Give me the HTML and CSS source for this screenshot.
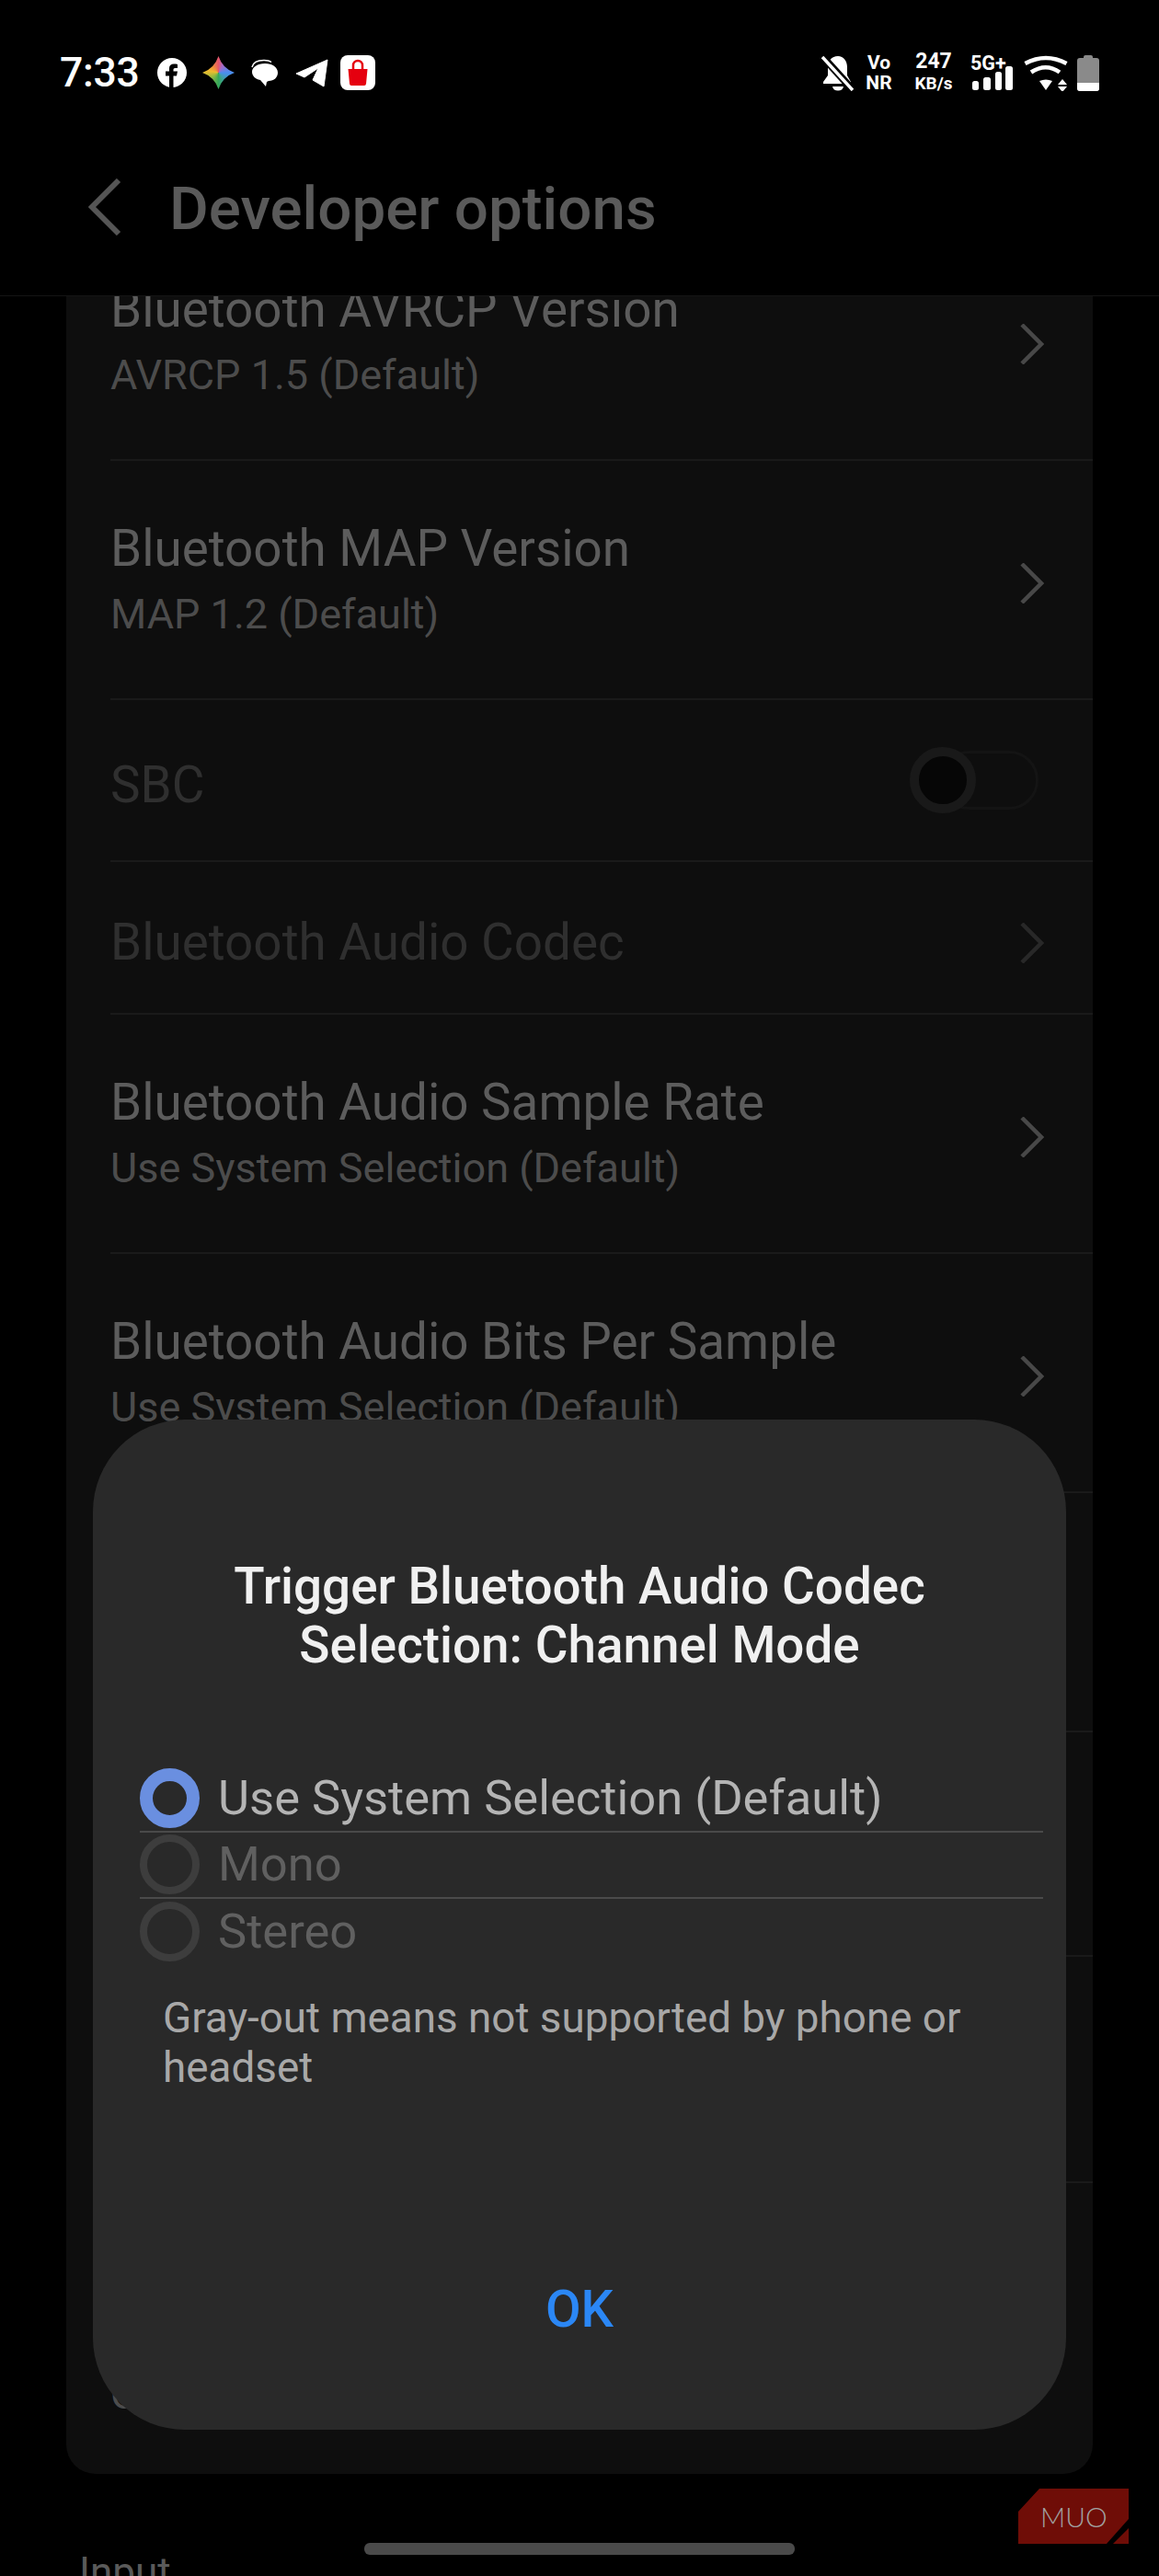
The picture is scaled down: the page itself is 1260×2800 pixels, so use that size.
FILE: index.html
```html
<!DOCTYPE html>
<html lang="en">
<head>
<meta charset="utf-8">
<title>Developer options</title>
<link rel="stylesheet" href="styles.css">
</head>
<body>
<div class="screen">
  <header class="top">
    <div class="status">
      <span class="time">7:33</span>
      <svg class="ic-fb" viewBox="0 0 32 32"><circle cx="16" cy="16" r="16" fill="#fff"/><path d="M13 32V19.500H9v-5h4V11c0-3 2-4.500 5-4.500 1.500 0 3 .2 4 .4V11h-2.500c-1.500 0-2 .8-2 2v1.500H22l-1 5h-3.500V32z" fill="#000"/></svg>
      <div class="ic-star"></div>
      <svg class="ic-msg" viewBox="0 0 31 30"><path d="M2 9C3 4 8 1.500 15 1.500c3 0 6 .5 8 2" fill="none" stroke="#fff" stroke-width="1.500"/><path d="M16 5c8 0 14 4 14 10 0 5-4 9-10 9l-2 1-1 5-6-7C5 22 2 18 2 14c0-5 6-9 14-9z" fill="#fff"/></svg>
      <svg class="ic-tg" viewBox="0 0 36 31"><path d="M1 16 35 1 31 30 19 23 25 10 10 20z" fill="#fff" stroke="#fff" stroke-linejoin="round" stroke-width="1"/></svg>
      <svg class="ic-shop" viewBox="0 0 38 38"><rect width="38" height="38" rx="8" fill="#fff"/><path d="M8.500 15h21L28 31q-.2 2-2 2H12q-1.800 0-2-2z" fill="#e5000f"/><path d="M14 16v-5a5 5 0 0 1 10 0v5" fill="none" stroke="#e5000f" stroke-width="2.500"/></svg>
      <div class="status-right">
        <svg class="ic-bell" viewBox="0 0 35 39"><path d="M18 1c-7 0-11 5-11 12v9l-5 7v2h30v-2l-4-7v-9c0-7-4-12-10-12z" fill="#fff"/><path d="M12 34h12q-1 4.500-6 4.500T12 34z" fill="#fff"/><path d="M-1-1 37 41" stroke="#000" stroke-width="8"/><path d="M1 2 34 38" stroke="#fff" stroke-width="3.500"/></svg>
        <div class="stack vo"><span>Vo</span><span>NR</span></div>
        <div class="stack speed"><span class="num">247</span><span>KB/s</span></div>
        <svg class="ic-net" viewBox="0 -4 46 44"><text x="0" y="15" class="net-text">5G+</text><rect x="2" y="27" width="7" height="10" rx="2.500" fill="#fff"/><rect x="14" y="23" width="8" height="14" rx="2.500" fill="#fff"/><rect x="27" y="17" width="7" height="20" rx="2.500" fill="#fff"/><rect x="38" y="11" width="8" height="26" rx="2.500" fill="#fff"/></svg>
        <svg class="ic-wifi" viewBox="0 0 48 39"><path d="M1.500 9Q24-3 46.500 9M8 18.500Q24 8 39 18.500" fill="none" stroke="#fff" stroke-width="4.500"/><path d="M17 28q7-3 14 0l-7 10z" fill="#fff"/><path d="M42 26l5 6H37zM37 34h10l-5 6z" fill="#fff"/></svg>
        <div class="battery"><div class="bat-cap"></div><div class="bat-body"><div class="bat-level"></div></div></div>
      </div>
    </div>
    <div class="appbar">
      <svg class="back" viewBox="0 0 36 62"><path d="M33 2 4 31l29 29" fill="none" stroke="#555" stroke-width="6"/></svg>
      <h1 class="page-title">Developer options</h1>
    </div>
  </header>

  <main class="scroll">
    <section class="card">
      <div class="row h260">
        <div class="row-text"><div class="r-title">Bluetooth AVRCP Version</div><div class="r-sub">AVRCP 1.5 (Default)</div></div>
        <svg class="chev" viewBox="0 0 26 44"><path d="M2 1l21 21L2 43" fill="none" stroke="#484848" stroke-width="4.500"/></svg>
      </div>
      <div class="row h260">
        <div class="row-text"><div class="r-title">Bluetooth MAP Version</div><div class="r-sub">MAP 1.2 (Default)</div></div>
        <svg class="chev" viewBox="0 0 26 44"><path d="M2 1l21 21L2 43" fill="none" stroke="#484848" stroke-width="4.500"/></svg>
      </div>
      <div class="row h176 off">
        <div class="row-text"><div class="r-title">SBC</div></div>
        <div class="toggle"><div class="thumb"></div></div>
      </div>
      <div class="row h166 off">
        <div class="row-text"><div class="r-title">Bluetooth Audio Codec</div></div>
        <svg class="chev chev-off" viewBox="0 0 26 44"><path d="M2 1l21 21L2 43" fill="none" stroke="#282828" stroke-width="4.500"/></svg>
      </div>
      <div class="row h260">
        <div class="row-text"><div class="r-title">Bluetooth Audio Sample Rate</div><div class="r-sub">Use System Selection (Default)</div></div>
        <svg class="chev" viewBox="0 0 26 44"><path d="M2 1l21 21L2 43" fill="none" stroke="#484848" stroke-width="4.500"/></svg>
      </div>
      <div class="row h260">
        <div class="row-text"><div class="r-title">Bluetooth Audio Bits Per Sample</div><div class="r-sub">Use System Selection (Default)</div></div>
        <svg class="chev" viewBox="0 0 26 44"><path d="M2 1l21 21L2 43" fill="none" stroke="#484848" stroke-width="4.500"/></svg>
      </div>
      <div class="row h260"></div>
      <div class="row h244"></div>
      <div class="row h246"></div>
      <div class="row last"><div class="r-sub">C</div></div>
    </section>
    <div class="section-label">Input</div>
  </main>

  <div class="dialog">
    <h2 class="d-title">Trigger Bluetooth Audio Codec<br>Selection: Channel Mode</h2>
    <div class="options">
      <div class="opt on"><span class="radio"></span><span class="opt-text">Use System Selection (Default)</span></div>
      <div class="opt"><span class="radio"></span><span class="opt-text">Mono</span></div>
      <div class="opt"><span class="radio"></span><span class="opt-text">Stereo</span></div>
    </div>
    <p class="note">Gray-out means not supported by phone or headset</p>
    <div class="ok">OK</div>
  </div>

  <div class="home"></div>
  <div class="muo">
    <svg class="muo-bg" viewBox="0 0 120 60"><path d="M23 0H120V33L96 60H0V25zM120 43V60H103z" fill="#6f0d07"/></svg>
    <span class="muo-text">MUO</span>
  </div>
</div>
</body>
</html>
```
FILE: styles.css
```css
* { box-sizing: border-box; }
html, body { margin: 0; padding: 0; background: #000; }
.screen {
  position: relative;
  width: 1260px;
  height: 2800px;
  overflow: hidden;
  background: #000;
  font-family: Roboto, "Liberation Sans", sans-serif;
  display: flex;
  flex-direction: column;
}
.top { flex: none; height: 322px; border-bottom: 1px solid #141414; background: #000; position: relative; z-index: 1; }
.status { height: 158px; display: flex; align-items: center; padding: 0 65px; color: #fff; }
.time { font-size: 44.500px; font-weight: 500; width: 106px; letter-spacing: -.3px; }
.ic-fb { width: 32px; height: 32px; flex: none; }
.ic-star {
  width: 35px; height: 36px; flex: none; margin-left: 17px;
  background: conic-gradient(#e4566b 0deg, #a56ac8 30deg, #4a8df0 90deg, #3f9ea8 140deg, #35a85a 180deg, #9dbb3c 240deg, #efbb2e 280deg, #ee8a3c 320deg, #e4566b 360deg);
  clip-path: path("M17.500 0Q22 13.500 35 18Q22 22.500 17.500 36Q13 22.500 0 18Q13 13.500 17.500 0Z");
}
.ic-msg { width: 31px; height: 30px; flex: none; margin-left: 17px; }
.ic-tg { width: 36px; height: 31px; flex: none; margin-left: 18px; }
.ic-shop { width: 38px; height: 38px; flex: none; margin-left: 13px; }
.status-right { margin-left: auto; display: flex; align-items: center; }
.ic-bell { width: 35px; height: 39px; flex: none; }
.stack { display: flex; flex-direction: column; align-items: center; font-weight: 700; }
.vo { font-size: 21px; line-height: 22px; margin-left: 13px; width: 29px; }
.speed { font-size: 19px; line-height: 24px; margin-left: 24px; width: 42px; }
.num { font-size: 23px; }
.ic-net { width: 46px; height: 44px; flex: none; margin-left: 19px; }
.net-text { font: 700 21.500px Roboto, sans-serif; fill: #fff; }
.ic-wifi { width: 48px; height: 39px; flex: none; margin-left: 12px; }
.battery { width: 24px; height: 39px; margin-left: 10px; display: flex; flex-direction: column; align-items: center; }
.bat-cap { width: 10px; height: 3px; background: #888; border-radius: 2px 2px 0 0; }
.bat-body { width: 24px; flex: 1; background: #8a8a8a; border-radius: 3px; display: flex; align-items: flex-end; overflow: hidden; }
.bat-level { width: 100%; height: 9px; background: #fff; }
.appbar { height: 137px; display: flex; align-items: center; padding: 0 0 0 96px; }
.back { width: 36px; height: 62px; flex: none; margin-top: -4px; }
.page-title { margin: 0 0 0 52px; font-size: 65.500px; line-height: 76px; font-weight: 500; color: #5a5a5a; }

.scroll { flex: 1; min-height: 0; overflow: hidden; }
.card { margin: -81px 72px 0; background: #0e0e0e; border-radius: 0 0 32px 32px; padding-left: 48px; }
.row { display: flex; align-items: center; justify-content: space-between; border-bottom: 2px solid #1a1a1a; padding-right: 53px; }
.h260 { height: 260px; }
.h176 { height: 176px; padding-top: 10px; }
.h166 { height: 166px; padding-top: 10px; }
.h244 { height: 244px; }
.h246 { height: 246px; }
.last { height: 316px; border-bottom: 0; align-items: flex-start; padding-top: 202px; }
.r-title { font-size: 54.800px; line-height: 64px; color: #5c5c5c; }
.r-sub { font-size: 45px; line-height: 56px; color: #4c4c4c; margin-top: 12px; }
.last .r-sub { margin-top: 0; }
.off .r-title { color: #2f2f2f; }
.chev { width: 26px; height: 44px; flex: none; margin-top: 8px; }
.chev-off { margin-top: 2px; }
.toggle { position: relative; width: 107px; height: 64px; margin-right: 6px; margin-top: -10px; border: 3px solid #141414; border-radius: 32px; }
.thumb { position: absolute; left: -36px; top: -7px; width: 72px; height: 72px; border-radius: 50%; background: #060606; border: 10px solid #191919; }

.section-label { margin: 80px 0 0 86px; font-size: 44px; line-height: 54px; color: #5a5a5a; }

.dialog {
  position: absolute; z-index: 2; left: 101px; top: 1543px; width: 1058px; height: 1098px;
  background: #292929; border-radius: 100px;
  display: flex; flex-direction: column; padding: 149px 25px 99px 51px;
}
.d-title { margin: 0 -25px 0 -51px; font-size: 54.800px; line-height: 64px; font-weight: 500; color: #f0f0f0; text-align: center; }
.options { margin-top: 100px; }
.opt { height: 72px; display: flex; align-items: center; padding-bottom: 2px; border-bottom: 2px solid #4a4a4a; gap: 20px; color: #606060; font-size: 52.500px; line-height: 64px; }
.opt:last-child { border-bottom: 0; }
.opt.on { color: #b4b4b4; }
.radio { width: 65px; height: 65px; flex: none; border-radius: 50%; border: 8px solid #3d3d3d; }
.on .radio { border: 14px solid #6a8fe0; }
.note { margin: 31px 20px 0 25px; font-size: 45.800px; line-height: 54px; color: #a8a8a8; }
.ok { margin: auto -25px 0 -51px; text-align: center; font-size: 56px; line-height: 64px; font-weight: 500; color: #2b87f5; }

.home { position: absolute; z-index: 3; left: 396px; top: 2764px; width: 468px; height: 13px; background: #4a4a4a; border-radius: 6px; }
.muo { position: absolute; z-index: 3; left: 1107px; top: 2705px; width: 120px; height: 60px; }
.muo-bg { display: block; width: 120px; height: 60px; }
.muo-text { position: absolute; left: 24px; top: 12px; font-family: Lato, sans-serif; font-weight: 300; font-size: 30px; line-height: 36px; color: #a0a0a0; }
```
